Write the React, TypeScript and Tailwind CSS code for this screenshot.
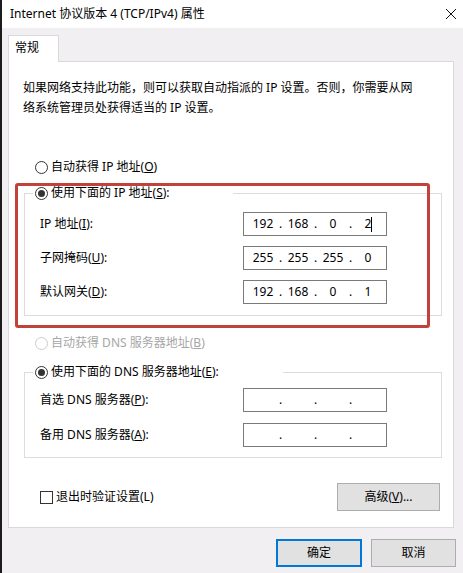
import React from 'react';

const FONT = { fontFamily: '"Segoe UI", "Noto Sans", "Noto Sans CJK SC", sans-serif' };

const Radio: React.FC<{ checked?: boolean; disabled?: boolean }> = ({ checked, disabled }) => (
  <span
    className={`flex h-[13px] w-[13px] shrink-0 items-center justify-center rounded-full border bg-white ${
      disabled ? 'border-[#cccccc]' : 'border-[#333333]'
    }`}
  >
    {checked && <span className="h-[7px] w-[7px] rounded-full bg-[#333333]" />}
  </span>
);

const IpBox: React.FC<{ parts?: string[]; caret?: boolean }> = ({ parts, caret }) => (
  <div className="flex h-[24px] w-[144px] items-center border border-[#7a7a7a] bg-white pl-[5px] text-[12px] text-black">
    {[0, 1, 2, 3].map((i) => (
      <React.Fragment key={i}>
        <span className="relative w-[28px] text-center">
          {parts ? parts[i] : ''}
          {caret && i === 3 && (
            <span className="absolute left-[17px] top-[2px] h-[15px] w-px bg-black" />
          )}
        </span>
        {i < 3 && <span className="w-[7px] text-center">.</span>}
      </React.Fragment>
    ))}
  </div>
);

const FieldRow: React.FC<{ label: React.ReactNode; children: React.ReactNode }> = ({ label, children }) => (
  <div className="flex h-[24px] items-center">
    <span className="w-[203px] text-[12px] text-black">{label}</span>
    {children}
  </div>
);

export default function App() {
  return (
    <div
      className="relative h-[573px] w-[463px] overflow-hidden border-l-2 border-[#1c1c1c] bg-[#f1eff2] text-[12px] text-black"
      style={FONT}
    >
      {/* title bar */}
      <div className="flex h-[28px] items-center justify-between bg-white pl-[8px] pr-[5px]">
        <span className="text-[12px]">Internet 协议版本 4 (TCP/IPv4) 属性</span>
        <svg width="12" height="12" viewBox="0 0 12 12" className="mr-[1px]">
          <path d="M1 1 L11 11 M11 1 L1 11" stroke="#111" strokeWidth="1" />
        </svg>
      </div>

      {/* tabs */}
      <div className="pl-[6px] pt-[7px]">
        <div className="relative z-10 -mb-px flex h-[27px] w-[51px] items-center border border-b-0 border-[#d9d9d9] bg-white pl-[6px] pb-[2px]">
          常规
        </div>

        <div className="h-[467px] w-[446px] border border-[#d9d9d9] bg-white">
          <p className="pl-[14px] pt-[16px] leading-[20px]">
            如果网络支持此功能，则可以获取自动指派的 IP 设置。否则，你需要从网
            <br />
            络系统管理员处获得适当的 IP 设置。
          </p>

          <label className="mt-[39px] flex h-[20px] items-center gap-[3px] pl-[26px]">
            <Radio />
            <span>
              自动获得 IP 地址(<u>O</u>)
            </span>
          </label>

          <fieldset className="ml-[15px] mt-[6px] w-[418px] border border-[#dcdcdc]">
            <legend className="ml-[8px] flex h-[20px] w-[200px] items-center gap-[3px] bg-white pl-[2px]">
              <Radio checked />
              <span>
                使用下面的 IP 地址(<u>S</u>):
              </span>
            </legend>
            <div className="flex flex-col gap-[10px] pb-[11px] pl-[15px] pt-[9px]">
              <FieldRow label={<>IP 地址(<u>I</u>):</>}>
                <IpBox parts={['192', '168', '0', '2']} caret />
              </FieldRow>
              <FieldRow label={<>子网掩码(<u>U</u>):</>}>
                <IpBox parts={['255', '255', '255', '0']} />
              </FieldRow>
              <FieldRow label={<>默认网关(<u>D</u>):</>}>
                <IpBox parts={['192', '168', '0', '1']} />
              </FieldRow>
            </div>
          </fieldset>

          <label className="mt-[17px] flex h-[20px] items-center gap-[3px] pl-[26px] text-[#a6a6a6]">
            <Radio disabled />
            <span>
              自动获得 DNS 服务器地址(<u>B</u>)
            </span>
          </label>

          <fieldset className="ml-[15px] mt-[9px] w-[418px] border border-[#dcdcdc]">
            <legend className="ml-[8px] flex h-[20px] w-[250px] items-center gap-[3px] bg-white pl-[2px]">
              <Radio checked />
              <span>
                使用下面的 DNS 服务器地址(<u>E</u>):
              </span>
            </legend>
            <div className="flex flex-col gap-[11px] pb-[10px] pl-[15px] pt-[6px]">
              <FieldRow label={<>首选 DNS 服务器(<u>P</u>):</>}>
                <IpBox />
              </FieldRow>
              <FieldRow label={<>备用 DNS 服务器(<u>A</u>):</>}>
                <IpBox />
              </FieldRow>
            </div>
          </fieldset>

          <div className="mt-[25px] flex h-[28px] items-center justify-between pl-[31px] pr-[13px]">
            <label className="flex items-center gap-[3px]">
              <span className="h-[13px] w-[13px] border border-[#333333] bg-white" />
              <span>退出时验证设置(L)</span>
            </label>
            <button className="h-[28px] w-[103px] border border-[#adadad] bg-[#e1e1e1] text-[12px]">
              高级(<u>V</u>)...
            </button>
          </div>
        </div>
      </div>

      {/* dialog buttons */}
      <div className="mt-[11px] flex justify-end gap-[9px] pr-[7px]">
        <button className="h-[28px] w-[86px] border-2 border-[#0078d7] bg-[#e1e1e1] text-[12px]">确定</button>
        <button className="h-[28px] w-[85px] border border-[#adadad] bg-[#e1e1e1] text-[12px]">取消</button>
      </div>

      {/* red annotation frame */}
      <div className="pointer-events-none absolute left-[13px] top-[183px] h-[145px] w-[415px] rounded-[3px] border-[3px] border-[#c2413a]" />
    </div>
  );
}
